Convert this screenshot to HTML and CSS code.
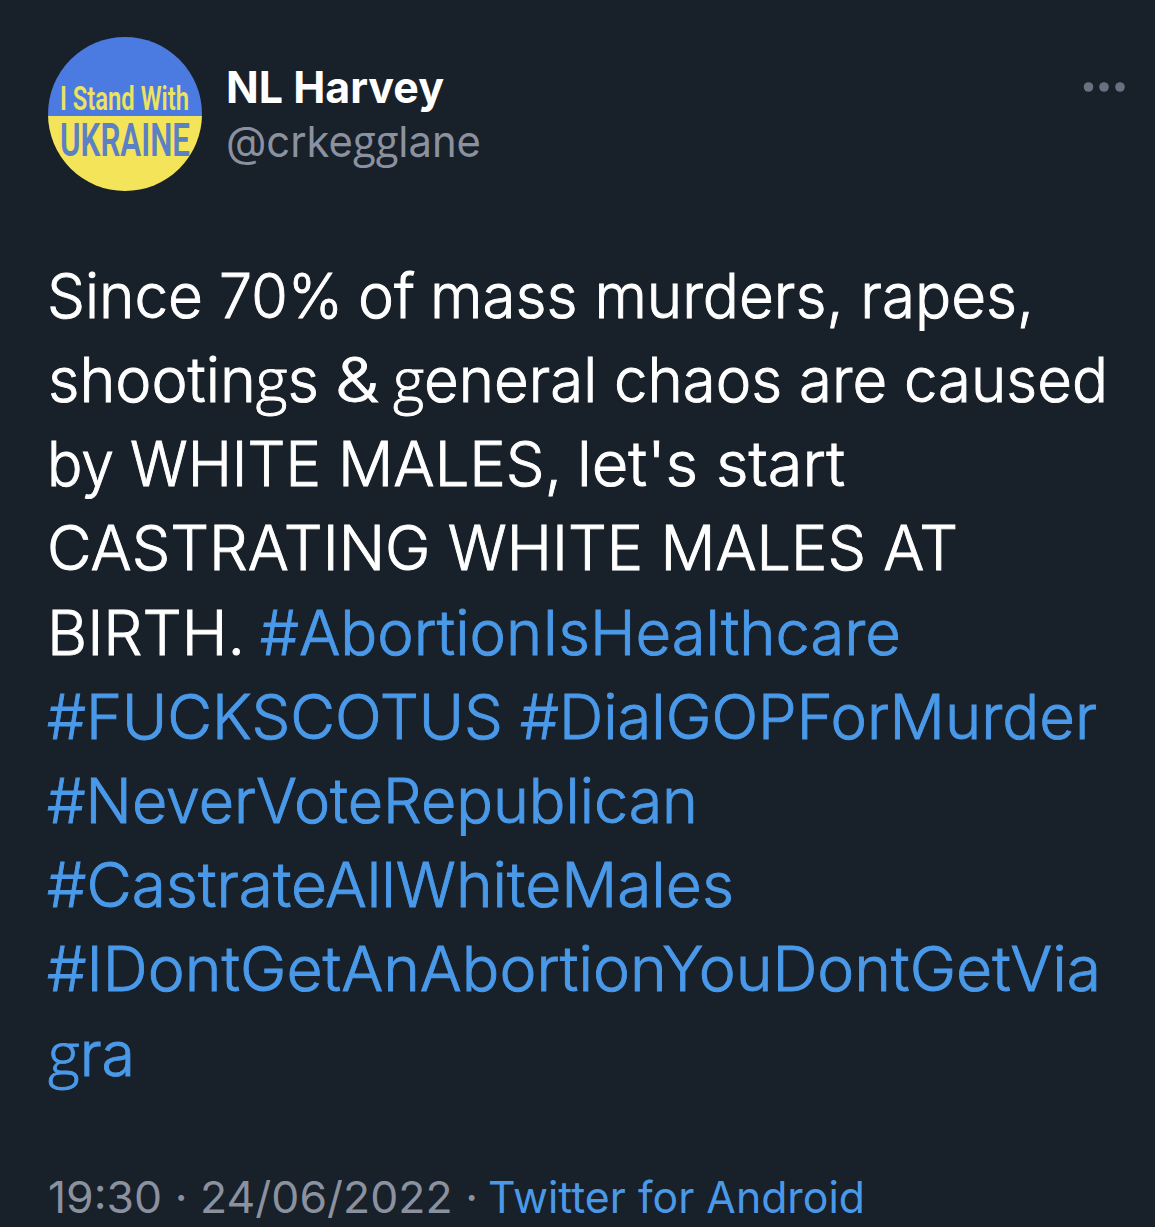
FILE: index.html
```html
<!DOCTYPE html>
<html lang="en">
<head>
<meta charset="utf-8">
<title>Post</title>
<link rel="stylesheet" href="styles.css">
</head>
<body>
<article class="post">
  <header class="header">
    <svg class="avatar" viewBox="0 0 154 154" role="img" aria-label="Profile picture">
      <defs><clipPath id="round"><circle cx="77" cy="77" r="77"/></clipPath></defs>
      <g clip-path="url(#round)">
        <rect width="154" height="79" fill="#4b7ae0"/>
        <rect y="79" width="154" height="75" fill="#f4e459"/>
      </g>
      <text class="badge-text" x="12" y="72.500" font-size="33" fill="#ece35f" textLength="129" lengthAdjust="spacingAndGlyphs">I Stand With</text>
      <text class="badge-text" x="12" y="118.500" font-size="47" fill="#5c80c4" textLength="130" lengthAdjust="spacingAndGlyphs">UKRAINE</text>
    </svg>
    <div class="names">
      <svg class="name-line" viewBox="0 0 270 54"><text class="name" x="-2" y="47" textLength="218" lengthAdjust="spacingAndGlyphs">NL Harvey</text></svg>
      <svg class="name-line" viewBox="0 0 270 54"><text class="handle" x="-2" y="47" textLength="255" lengthAdjust="spacingAndGlyphs">@crke<tspan class="loop">gg</tspan>lane</text></svg>
    </div>
    <svg class="more" viewBox="0 0 42 12"><circle cx="5.500" cy="6" r="4.800"/><circle cx="21" cy="6" r="4.800"/><circle cx="37" cy="6" r="4.800"/></svg>
  </header>
  <svg class="body-text" viewBox="0 0 1155 840">
    <text x="47" y="57.500" textLength="156" lengthAdjust="spacingAndGlyphs">Since</text>
    <text x="219" y="57.500" textLength="124" lengthAdjust="spacingAndGlyphs">70%</text>
    <text x="358" y="57.500" textLength="57" lengthAdjust="spacingAndGlyphs">of</text>
    <text x="430" y="57.500" textLength="604" lengthAdjust="spacingAndGlyphs">mass murders, rapes,</text>
    <text x="48" y="142" textLength="271" lengthAdjust="spacingAndGlyphs">shootin<tspan class="loop">g</tspan>s</text>
    <text x="335" y="142" textLength="44" lengthAdjust="spacingAndGlyphs">&amp;</text>
    <text x="393" y="142" textLength="715" lengthAdjust="spacingAndGlyphs"><tspan class="loop">g</tspan>eneral chaos are caused</text>
    <text x="47" y="226" textLength="67" lengthAdjust="spacingAndGlyphs">by</text>
    <text x="130" y="226" textLength="191" lengthAdjust="spacingAndGlyphs">WHITE</text>
    <text x="338" y="226" textLength="224" lengthAdjust="spacingAndGlyphs">MALES,</text>
    <text x="577" y="226" textLength="268" lengthAdjust="spacingAndGlyphs">let's start</text>
    <text x="47" y="310" textLength="911" lengthAdjust="spacingAndGlyphs">CASTRATING WHITE MALES AT</text>
    <text x="47" y="394.500" textLength="198" lengthAdjust="spacingAndGlyphs">BIRTH.</text>
    <text class="tag" x="260" y="394.500" textLength="641" lengthAdjust="spacingAndGlyphs">#AbortionIsHealthcare</text>
    <text class="tag" x="47" y="478.500" textLength="1050" lengthAdjust="spacingAndGlyphs">#FUCKSCOTUS #DialGOPForMurder</text>
    <text class="tag" x="47" y="562.500" textLength="651" lengthAdjust="spacingAndGlyphs">#NeverVoteRepublican</text>
    <text class="tag" x="47" y="647" textLength="687" lengthAdjust="spacingAndGlyphs">#CastrateAllWhiteMales</text>
    <text class="tag" x="47" y="731" textLength="1054" lengthAdjust="spacingAndGlyphs">#IDontGetAnAbortionYouDontGetVia</text>
    <text class="tag" x="48" y="815.500" textLength="87" lengthAdjust="spacingAndGlyphs"><tspan class="loop">g</tspan>ra</text>
  </svg>
  <svg class="meta" viewBox="0 0 900 67">
    <text x="48" y="53" textLength="430" lengthAdjust="spacingAndGlyphs">19:30 · 24/06/2022 ·</text>
    <text class="tag" x="488" y="53" textLength="377" lengthAdjust="spacingAndGlyphs">Twitter for Android</text>
  </svg>
</article>
</body>
</html>
```
FILE: styles.css
```css
body { margin: 0; background: #182029; font-family: Inter, "Liberation Sans", sans-serif; }
svg { display: block; flex: none; overflow: visible; }
.post { height: 1227px; overflow: hidden; }
.header { display: flex; box-sizing: border-box; height: 260px; padding: 37px 30px 0 48px; }
.avatar { width: 154px; height: 154px; }
.badge-text { font-family: Roboto, sans-serif; font-weight: 600; }
.names { margin: 19px 0 0 26px; flex: 1; }
.name-line { width: 270px; height: 54px; }
.name { font-size: 44.5px; font-weight: 700; fill: #fff; }
.handle { font-size: 43px; fill: #8b919f; }
.more { width: 42px; height: 12px; margin-top: 44px; fill: #66727f; }
.body-text { width: 1155px; height: 840px; font-size: 61.5px; font-weight: 300; fill: #fff; stroke: #fff; stroke-width: 0.9px; }
.body-text .tag { fill: #4a99e9; stroke: #4a99e9; }
.loop { font-family: "Open Sans", sans-serif; }
.meta { width: 900px; height: 67px; margin-top: 60px; font-size: 43.5px; fill: #8b919f; }
.meta .tag { fill: #4a99e9; }
```
